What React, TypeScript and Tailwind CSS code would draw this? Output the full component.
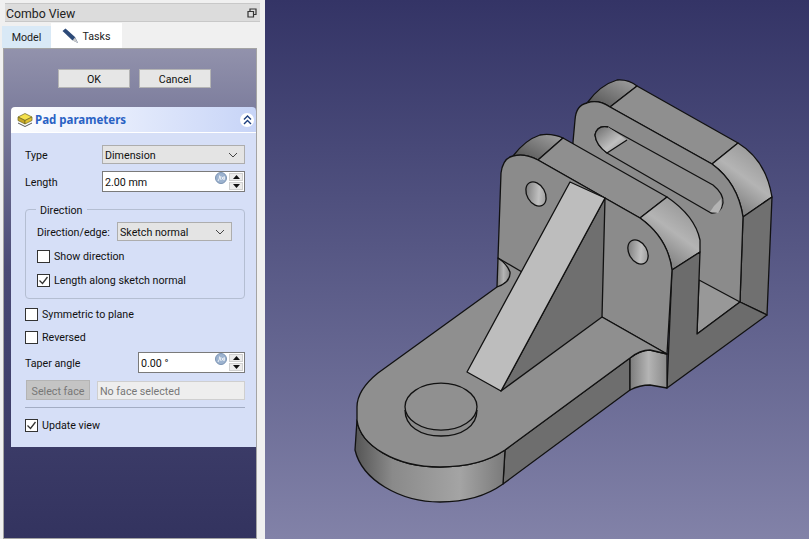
import React from 'react'

const Spin = ({ value, inputClass }: { value: string; inputClass: string }) => (
  <div className={`relative flex items-center h-[21px] bg-white border border-[#7a7a7a] ${inputClass}`}>
    <span className="pl-[2px] pt-[3px] text-[#111]">{value}</span>
    {/* expression binding icon */}
    <svg className="absolute right-[17px] top-[0px] w-[12px] h-[12px]" viewBox="0 0 12 12">
      <circle cx="6" cy="6" r="5.5" fill="#9db3cf" stroke="#7b93b3" />
      <path d="M3 9 Q5 6 4.5 3.5 M6 4 Q5 6 6 8 M9 4 Q10 6 9 8 M7 5 L8.5 7.5 M8.5 5 L7 7.5" stroke="#fff" strokeWidth="0.8" fill="none" />
    </svg>
    <div className="absolute right-[1px] top-[1px] bottom-[1px] w-[14px] flex flex-col gap-[1px]">
      <div className="flex-1 flex items-center justify-center bg-[#ececec] border border-[#d0d0d0]">
        <svg className="w-[7px] h-[4px]" viewBox="0 0 7 4"><path d="M3.5 0 L7 4 H0Z" fill="#111" /></svg>
      </div>
      <div className="flex-1 flex items-center justify-center bg-[#ececec] border border-[#d0d0d0]">
        <svg className="w-[7px] h-[4px]" viewBox="0 0 7 4"><path d="M0 0 H7 L3.5 4Z" fill="#111" /></svg>
      </div>
    </div>
  </div>
)

const Combo = ({ value, className }: { value: string; className: string }) => (
  <div className={`flex items-center justify-between h-[19px] pl-[2px] pr-[6px] bg-[#e4e4e4] border border-[#adadad] text-[#111] ${className}`}>
    <span className="pt-[3px]">{value}</span>
    <svg className="w-[10px] h-[6px]" viewBox="0 0 10 6"><path d="M1 1 L5 5 L9 1" fill="none" stroke="#444" strokeWidth="1" /></svg>
  </div>
)

const Check = ({ label, checked }: { label: string; checked?: boolean }) => (
  <div className="flex items-center gap-[4px] h-[14px] text-[#111]">
    <div className="w-[13px] h-[13px] bg-white border border-[#333] flex items-center justify-center shrink-0">
      {checked && (
        <svg className="w-[11px] h-[11px]" viewBox="0 0 11 11"><path d="M1.5 5.5 L4.5 8.5 L9.5 2" fill="none" stroke="#333" strokeWidth="1.3" /></svg>
      )}
    </div>
    <span className="pt-[2px]">{label}</span>
  </div>
)

const Model3D = () => (
  <svg className="w-full h-full" viewBox="265 0 544 539">
    <defs>
      <linearGradient id="cap" x1="0" y1="1" x2="1" y2="0">
        <stop offset="0" stopColor="#4f4f4f" />
        <stop offset="1" stopColor="#a2a2a2" />
      </linearGradient>
      <linearGradient id="corner" x1="0.9" y1="0" x2="0.3" y2="1">
        <stop offset="0" stopColor="#8e8e8e" />
        <stop offset="0.5" stopColor="#b4b4b4" />
        <stop offset="1" stopColor="#6e6e6e" />
      </linearGradient>
      <linearGradient id="wall" x1="0" y1="0" x2="1" y2="0">
        <stop offset="0" stopColor="#555" />
        <stop offset="0.25" stopColor="#8a8a8a" />
        <stop offset="0.7" stopColor="#a4a4a4" />
        <stop offset="1" stopColor="#7a7a7a" />
      </linearGradient>
      <linearGradient id="notch" x1="0" y1="0" x2="1" y2="0">
        <stop offset="0" stopColor="#7c7c7c" />
        <stop offset="0.5" stopColor="#b4b4b4" />
        <stop offset="1" stopColor="#8a8a8a" />
      </linearGradient>
      <linearGradient id="hole" x1="0" y1="0" x2="1" y2="1">
        <stop offset="0" stopColor="#6a6a6a" />
        <stop offset="0.6" stopColor="#c0c0c0" />
        <stop offset="1" stopColor="#8a8a8a" />
      </linearGradient>
    </defs>
    <g stroke="#111" strokeWidth="1.3" strokeLinejoin="round">
      {/* back plate */}
      <path d="M587 103 Q600 85 617 80 Q628 79 637 86 L610 107 Q598 99 587 103Z" fill="url(#cap)" />
      <path d="M637 86 L738 143 L712 164 L610 107Z" fill="#8f8f8f" />
      <path d="M738 143 Q766 160 772 197 L743 217 Q738 183 712 164Z" fill="url(#corner)" />
      <path d="M743 217 L772 197 L767 315 L740 302Z" fill="#707070" />
      <path d="M573 142 L575 120 Q576 105 587 103 Q598 99 610 107 L712 164 Q738 183 743 217 L740 302 L700 328 L573 300Z" fill="#8b8b8b" />
      <path d="M699 280 L740 302 L697 334Z" fill="#989898" />
      {/* slot */}
      <path d="M608 127 L713 185 Q724 194 723 203 Q721 214 711 213 L607 153 Q596 145 595 135 Q597 125 608 127Z" fill="#8e8e8e" />
      <path d="M608 127 Q597 125 595 135 Q596 145 607 153 L627 140Z" fill="url(#hole)" stroke="none" />
      <path d="M608 127 Q597 125 595 135 Q596 145 607 153 L627 140" fill="none" />
      <path d="M714 206 L721 199 Q723 208 718 213 L710 212Z" fill="#b4b4b4" stroke="none" />
      {/* front plate */}
      <path d="M513 156 Q525 140 540 135 Q552 133 563 138 L538 160 Q525 153 513 156Z" fill="url(#cap)" />
      <path d="M563 138 L667 197 L640 218 L538 160Z" fill="#8f8f8f" />
      <path d="M667 197 Q695 216 700 240 L700 252 L672 270 Q668 238 640 218Z" fill="url(#corner)" />
      {/* side of the front plate and bottom of the back plate, one face */}
      <path d="M672 270 L700 252 L697 334 L740 302 L767 315 L667 388Z" fill="#6c6c6c" />
      <path d="M498 258 L501 173 Q503 158 513 156 Q525 153 538 160 L640 218 Q668 238 672 270 L667 354 L602 317 L520 300Z" fill="#8b8b8b" />
      <ellipse cx="536" cy="194" rx="9" ry="13" transform="rotate(-30 536 194)" fill="url(#hole)" />
      <ellipse cx="638" cy="252" rx="9" ry="13" transform="rotate(-30 638 252)" fill="url(#hole)" />
      {/* base */}
      <path d="M505 450 L630 358 L630 390 L503 484Z" fill="#6e6e6e" />
      <path d="M630 358 Q640 350 650 350 L667 354 L667 388 L650 385 Q640 385 630 390Z" fill="url(#notch)" />
      <path d="M357 420 L355 450 C362 480 400 502 440 502 Q478 502 503 484 L505 450 Q480 467 440 467 C395 467 360 445 357 420Z" fill="url(#wall)" />
      <path d="M497 287 L378 373 Q357 390 357 407 L357 420 C360 445 395 467 440 467 Q480 467 505 450 L630 358 Q640 350 650 350 L667 354 L602 317 L522 272 L498 258 Z" fill="#8f8f8f" stroke="none" />
      <path d="M497 287 L378 373 Q357 390 357 407 L357 420 C360 445 395 467 440 467 Q480 467 505 450 L630 358 Q640 350 650 350 L667 354 L602 317" fill="none" />
      <path d="M498 258 L522 272" fill="none" />
      <path d="M498 258 L497 287 Q511 282 510 272 Q507 264 498 258Z" fill="url(#notch)" />
      {/* rib */}
      <path d="M605 198 L602 317 L501 391Z" fill="#6f6f6f" />
      <path d="M570 182 L605 198 L501 391 L467 372Z" fill="#bdbdbd" />
      {/* boss */}
      <path d="M405 410 C405 426 420 436 441 436 C462 436 477 426 477 410" fill="#8b8b8b" />
      <ellipse cx="441" cy="406.7" rx="36" ry="23.5" fill="#909090" />
    </g>
  </svg>
)

export default function App() {
  return (
    <div className="flex w-[809px] h-[539px] overflow-hidden bg-[#f0f0f0] text-[10.7px]" style={{ fontFamily: 'Roboto, sans-serif' }}>
      {/* Combo view dock */}
      <div className="flex flex-col w-[265px] h-full pt-[3px] shrink-0">
        <div className="flex items-center justify-between h-[19px] ml-[5px] mr-[5px] pl-[1px] pr-[3px] bg-[#dcdcdc] border-y border-[#c8c8c8] text-[12.3px] text-[#222]">
          <span className="pt-[3px]">Combo View</span>
          <svg className="w-[10px] h-[10px]" viewBox="0 0 10 10">
            <path d="M3 3 V1 H9 V6.5 H7 M1 3.5 H6.5 V9 H1Z" fill="none" stroke="#333" strokeWidth="1.2" />
          </svg>
        </div>
        <div className="flex items-end h-[26px] pl-[2px]">
          <div className="flex items-center justify-center w-[49px] h-[22px] pt-[3px] bg-[#d9e9f6] text-[#222]">Model</div>
          <div className="flex items-center justify-center gap-[3px] w-[71px] h-[25px] bg-white text-[#222]">
            <svg className="w-[17px] h-[16px]" viewBox="0 0 17 16">
              <path d="M0.5 3 L3.5 0.5 L13 9 L16 15 L10 12Z" fill="#2d4a78" />
              <path d="M13 9.5 L16 15 L10.5 12.5Z" fill="#c9c9c9" />
            </svg>
            <span className="pt-[3px]">Tasks</span>
          </div>
        </div>
        <div className="flex flex-col flex-1 ml-[3px] w-[254px] border border-[#a4a4a4] bg-gradient-to-b from-[#9292ac] via-[#4a4a76] via-45% to-[#33335f] pl-[7px]">
          <div className="flex gap-[9px] mt-[20px] ml-[47px]">
            <div className="flex items-center justify-center w-[72px] h-[19px] pt-[3px] bg-[#e6e6e6] border border-[#b4b4b4] text-[#111]">OK</div>
            <div className="flex items-center justify-center w-[72px] h-[19px] pt-[3px] bg-[#e6e6e6] border border-[#b4b4b4] text-[#111]">Cancel</div>
          </div>
          {/* Pad parameters task box */}
          <div className="mt-[19px] w-[245px]">
            <div className="flex items-center justify-between h-[25px] pl-[6px] pr-[2px] rounded-t-[4px] bg-gradient-to-r from-white to-[#c7d4f7]">
              <div className="flex items-center gap-[2px]">
                <svg className="w-[16px] h-[15px]" viewBox="0 0 16 15">
                  <path d="M1 5 L8 1.5 L15 5 L8 8.5Z" fill="#f4e04d" stroke="#6b6420" strokeWidth="0.7" />
                  <path d="M1 5 L8 8.5 V12 L1 8.5Z" fill="#c9a825" stroke="#6b6420" strokeWidth="0.7" />
                  <path d="M15 5 L8 8.5 V12 L15 8.5Z" fill="#e3c332" stroke="#6b6420" strokeWidth="0.7" />
                  <path d="M1 11 L8 14.5 L15 11" fill="none" stroke="#555" strokeWidth="1" />
                </svg>
                <span className="text-[11.5px] font-bold text-[#2a62c4]" style={{ fontFamily: '"Noto Sans", sans-serif' }}>Pad parameters</span>
              </div>
              <div className="flex items-center justify-center w-[14px] h-[14px] rounded-full bg-white">
                <svg className="w-[9px] h-[10px]" viewBox="0 0 9 10">
                  <path d="M1 4.5 L4.5 1 L8 4.5 M1 9 L4.5 5.5 L8 9" fill="none" stroke="#1d3f7f" strokeWidth="1.4" />
                </svg>
              </div>
            </div>
            <div className="flex flex-col h-[315px] bg-[#d6dff7] border-t border-white pl-[14px] pr-[11px] pt-[12px]">
              <div className="flex items-center justify-between">
                <span className="pt-[3px] text-[#111]">Type</span>
                <Combo value="Dimension" className="w-[143px]" />
              </div>
              <div className="flex items-center justify-between mt-[7px]">
                <span className="pt-[3px] text-[#111]">Length</span>
                <Spin value="2.00 mm" inputClass="w-[143px]" />
              </div>
              <div className="relative mt-[17px] h-[90px] border border-[#b4bed2] rounded-[4px] pl-[11px] pr-[12px] pt-[12px]">
                <span className="absolute -top-[8px] left-[10px] px-[4px] pt-[1px] bg-[#d6dff7] text-[#111]">Direction</span>
                <div className="flex items-center justify-between">
                  <span className="pt-[3px] text-[#111]">Direction/edge:</span>
                  <Combo value="Sketch normal" className="w-[115px]" />
                </div>
                <div className="mt-[8px]"><Check label="Show direction" /></div>
                <div className="mt-[10px]"><Check label="Length along sketch normal" checked /></div>
              </div>
              <div className="mt-[8px]"><Check label="Symmetric to plane" /></div>
              <div className="mt-[9px]"><Check label="Reversed" /></div>
              <div className="flex items-center justify-between mt-[8px]">
                <span className="pt-[3px] text-[#111]">Taper angle</span>
                <Spin value="0.00 °" inputClass="w-[107px]" />
              </div>
              <div className="flex items-center justify-between mt-[7px] pl-[1px]">
                <div className="flex items-center justify-center w-[64px] h-[20px] pt-[3px] bg-[#c4c4c4] border border-[#b4b4b4] text-[#777]">Select face</div>
                <div className="flex items-center w-[148px] h-[19px] pl-[2px] pt-[3px] bg-[#eeeeee] border border-[#cfcfcf] text-[#777]">No face selected</div>
              </div>
              <div className="mt-[7px] h-[1px] bg-[#a3adc4]" />
              <div className="mt-[10px]"><Check label="Update view" checked /></div>
            </div>
          </div>
        </div>
      </div>
      {/* 3D view */}
      <div className="flex-1 h-full bg-gradient-to-b from-[#343466] to-[#8282a8]">
        <Model3D />
      </div>
    </div>
  )
}
